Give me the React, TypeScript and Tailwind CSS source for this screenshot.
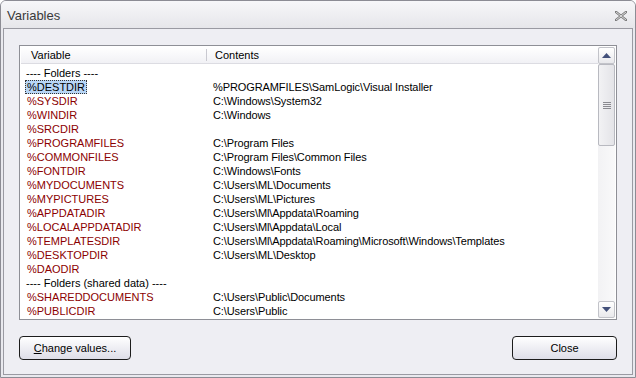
import React from "react";

const rows: { v: string; c?: string; kind: "hdr" | "var" }[] = [
  { v: "---- Folders ----", kind: "hdr" },
  { v: "%DESTDIR", c: "%PROGRAMFILES\\SamLogic\\Visual Installer", kind: "var" },
  { v: "%SYSDIR", c: "C:\\Windows\\System32", kind: "var" },
  { v: "%WINDIR", c: "C:\\Windows", kind: "var" },
  { v: "%SRCDIR", c: "", kind: "var" },
  { v: "%PROGRAMFILES", c: "C:\\Program Files", kind: "var" },
  { v: "%COMMONFILES", c: "C:\\Program Files\\Common Files", kind: "var" },
  { v: "%FONTDIR", c: "C:\\Windows\\Fonts", kind: "var" },
  { v: "%MYDOCUMENTS", c: "C:\\Users\\ML\\Documents", kind: "var" },
  { v: "%MYPICTURES", c: "C:\\Users\\ML\\Pictures", kind: "var" },
  { v: "%APPDATADIR", c: "C:\\Users\\Ml\\Appdata\\Roaming", kind: "var" },
  { v: "%LOCALAPPDATADIR", c: "C:\\Users\\Ml\\Appdata\\Local", kind: "var" },
  { v: "%TEMPLATESDIR", c: "C:\\Users\\Ml\\Appdata\\Roaming\\Microsoft\\Windows\\Templates", kind: "var" },
  { v: "%DESKTOPDIR", c: "C:\\Users\\ML\\Desktop", kind: "var" },
  { v: "%DAODIR", c: "", kind: "var" },
  { v: "---- Folders (shared data) ----", kind: "hdr" },
  { v: "%SHAREDDOCUMENTS", c: "C:\\Users\\Public\\Documents", kind: "var" },
  { v: "%PUBLICDIR", c: "C:\\Users\\Public", kind: "var" },
];

const font = { fontFamily: '"Liberation Sans", Arial, sans-serif' };

export default function App() {
  return (
    <div
      className="w-[636px] h-[378px] flex flex-col bg-[#e9e9ee] border border-[#8c8c94] rounded-t-[6px] text-[11px] text-black overflow-hidden"
      style={font}
    >
      {/* Title bar */}
      <div className="h-[27px] flex items-center justify-between pl-[6px] pr-[8px] bg-gradient-to-b from-[#f7f7f9] to-[#e6e6ea] shrink-0">
        <span className="text-[13px] text-[#3a3a3a] mt-[3px]">Variables</span>
        <svg width="12" height="10" viewBox="0 0 12 10" className="mt-[3px]">
          <path d="M1 1 L11 9 M11 1 L1 9" stroke="#7a7a7a" strokeWidth="2.4" strokeLinecap="square" />
          <path d="M1 1 L11 9 M11 1 L1 9" stroke="#f4f4f6" strokeWidth="0.8" />
        </svg>
      </div>
      {/* Client */}
      <div className="flex-1 mx-[2px] mb-[2px] border border-[#9a9aa2] bg-[#eeeef3] flex flex-col px-[15px] pt-[16px]">
        <div className="h-[275px] border border-[#8e8f96] bg-white flex p-[1px]">
          <div className="flex-1 flex flex-col min-w-0">
            <div className="h-[17px] flex items-center bg-gradient-to-b from-white to-[#f1f1f5] border-b border-[#dcdce2] shrink-0">
              <div className="w-[186px] pl-[10px] border-r border-[#c9c9d0] h-[12px] flex items-center">Variable</div>
              <div className="pl-[8px]">Contents</div>
            </div>
            <div className="flex flex-col pt-[2px]">
              {rows.map((r, i) => (
                <div key={i} className="h-[14px] flex items-center">
                  {r.kind === "hdr" ? (
                    <span className="pl-[5px]">{r.v}</span>
                  ) : (
                    <>
                      <div className="w-[192px] pl-[4px] flex items-center">
                        {i === 1 ? (
                          <span className="bg-[#b8d6f6] border border-dotted border-[#333] px-[1px] h-[14px] leading-[12px] text-black">
                            {r.v}
                          </span>
                        ) : (
                          <span className="pl-[2px] text-[#8b0000]">{r.v}</span>
                        )}
                      </div>
                      <div className="whitespace-nowrap tracking-[-0.1px]">{r.c}</div>
                    </>
                  )}
                </div>
              ))}
            </div>
          </div>
          {/* Scrollbar */}
          <div className="w-[17px] flex flex-col bg-gradient-to-r from-[#f2f2f4] to-[#f9f9fa] shrink-0">
            <div className="h-[17px] border border-[#c2c3c9] rounded-[2px] bg-gradient-to-b from-white to-[#e9e9ec] flex items-center justify-center">
              <svg width="9" height="5" viewBox="0 0 9 5"><path d="M4.5 0 L9 5 L0 5 Z" fill="#43507a" /></svg>
            </div>
            <div className="h-[82px] border border-[#b8b9c0] rounded-[2px] bg-gradient-to-r from-[#f2f2f4] to-[#e4e4e8] flex flex-col items-center justify-center gap-[1px]">
              <div className="w-[8px] h-[1px] bg-[#8a8a90]" />
              <div className="w-[8px] h-[1px] bg-[#8a8a90]" />
              <div className="w-[8px] h-[1px] bg-[#8a8a90]" />
              <div className="w-[8px] h-[1px] bg-[#8a8a90]" />
            </div>
            <div className="flex-1" />
            <div className="h-[17px] border border-[#c2c3c9] rounded-[2px] bg-gradient-to-b from-white to-[#e9e9ec] flex items-center justify-center">
              <svg width="9" height="5" viewBox="0 0 9 5"><path d="M0 0 L9 0 L4.5 5 Z" fill="#43507a" /></svg>
            </div>
          </div>
        </div>
        <div className="flex justify-between mt-[16px]">
          <button className="w-[112px] h-[24px] rounded-[4px] border border-[#1c1c1c] bg-gradient-to-b from-white to-[#dedee8] text-[11px]" style={font}>
            <span className="underline">C</span>hange values...
          </button>
          <button className="w-[105px] h-[24px] rounded-[4px] border border-[#1c1c1c] bg-gradient-to-b from-white to-[#dedee8] text-[11px]" style={font}>
            Close
          </button>
        </div>
      </div>
    </div>
  );
}
